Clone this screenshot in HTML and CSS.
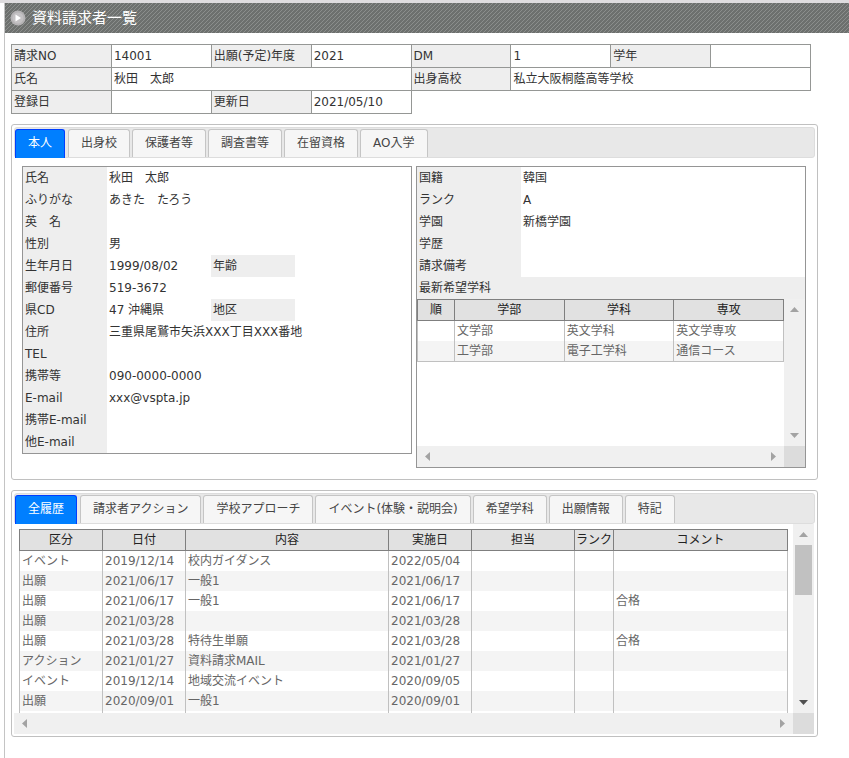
FILE: index.html
```html
<!DOCTYPE html>
<html lang="ja">
<head>
    <meta charset="UTF-8">
    <meta name="viewport" content="width=device-width, initial-scale=1.0">
    <title>資料請求者一覧</title>
    <link rel="stylesheet" href="styles.css">
</head>
<body>
    <div class="frame">
        <header class="page-header">
            <svg class="header-icon" width="16" height="16" viewBox="0 0 16 16">
                <circle cx="8" cy="8" r="7.5" fill="#b5b3b5"/>
                <circle cx="8" cy="8" r="5.5" fill="#c4c2c4"/>
                <path d="M5.5 4.5L11 8L5.5 11.5Z" fill="#fff"/>
            </svg>
            <h1>資料請求者一覧</h1>
        </header>

        <main>
            <!-- 基本情報 -->
            <table class="summary">
                <tr>
                    <th>請求NO</th><td>14001</td>
                    <th>出願(予定)年度</th><td>2021</td>
                    <th>DM</th><td>1</td>
                    <th>学年</th><td></td>
                </tr>
                <tr>
                    <th>氏名</th><td colspan="3">秋田　太郎</td>
                    <th>出身高校</th><td colspan="3">私立大阪桐蔭高等学校</td>
                </tr>
                <tr>
                    <th>登録日</th><td></td>
                    <th>更新日</th><td>2021/05/10</td>
                </tr>
            </table>

            <!-- 本人情報 -->
            <section class="panel">
                <nav class="tabs">
                    <button type="button" class="tab active">本人</button>
                    <button type="button" class="tab">出身校</button>
                    <button type="button" class="tab">保護者等</button>
                    <button type="button" class="tab">調査書等</button>
                    <button type="button" class="tab">在留資格</button>
                    <button type="button" class="tab">AO入学</button>
                </nav>
                <div class="person">
                    <div class="box">
                        <table class="detail">
                            <colgroup>
                                <col class="col-label"><col class="col-value"><col class="col-label"><col>
                            </colgroup>
                            <tr><th>氏名</th><td colspan="3">秋田　太郎</td></tr>
                            <tr><th>ふりがな</th><td colspan="3">あきた　たろう</td></tr>
                            <tr><th>英　名</th><td colspan="3"></td></tr>
                            <tr><th>性別</th><td colspan="3">男</td></tr>
                            <tr><th>生年月日</th><td>1999/08/02</td><th>年齢</th><td></td></tr>
                            <tr><th>郵便番号</th><td colspan="3">519-3672</td></tr>
                            <tr><th>県CD</th><td>47 沖縄県</td><th>地区</th><td></td></tr>
                            <tr><th>住所</th><td colspan="3">三重県尾鷲市矢浜XXX丁目XXX番地</td></tr>
                            <tr><th>TEL</th><td colspan="3"></td></tr>
                            <tr><th>携帯等</th><td colspan="3">090-0000-0000</td></tr>
                            <tr><th>E-mail</th><td colspan="3">xxx@vspta.jp</td></tr>
                            <tr><th>携帯E-mail</th><td colspan="3"></td></tr>
                            <tr><th>他E-mail</th><td colspan="3"></td></tr>
                        </table>
                    </div>
                    <div class="box">
                        <table class="detail">
                            <colgroup>
                                <col class="col-value"><col>
                            </colgroup>
                            <tr><th>国籍</th><td>韓国</td></tr>
                            <tr><th>ランク</th><td>A</td></tr>
                            <tr><th>学園</th><td>新橋学園</td></tr>
                            <tr><th>学歴</th><td></td></tr>
                            <tr><th>請求備考</th><td></td></tr>
                            <tr><th colspan="2">最新希望学科</th></tr>
                        </table>
                        <div class="scroller wishes">
                            <div class="view">
                                <table class="grid">
                                    <colgroup>
                                        <col class="col-order"><col><col><col>
                                    </colgroup>
                                    <thead>
                                        <tr><th>順</th><th>学部</th><th>学科</th><th>専攻</th></tr>
                                    </thead>
                                    <tbody>
                                        <tr><td></td><td>文学部</td><td>英文学科</td><td>英文学専攻</td></tr>
                                        <tr><td></td><td>工学部</td><td>電子工学科</td><td>通信コース</td></tr>
                                    </tbody>
                                </table>
                            </div>
                            <div class="bar bar-v">
                                <button type="button" class="arrow" aria-label="上へ"><svg width="9" height="5" viewBox="0 0 9 5"><path d="M4.5 0L9 5H0Z"/></svg></button>
                                <button type="button" class="arrow" aria-label="下へ"><svg width="9" height="5" viewBox="0 0 9 5"><path d="M0 0H9L4.5 5Z"/></svg></button>
                            </div>
                            <div class="bar bar-h">
                                <button type="button" class="arrow" aria-label="左へ"><svg width="5" height="9" viewBox="0 0 5 9"><path d="M5 0V9L0 4.5Z"/></svg></button>
                                <button type="button" class="arrow" aria-label="右へ"><svg width="5" height="9" viewBox="0 0 5 9"><path d="M0 0L5 4.5L0 9Z"/></svg></button>
                            </div>
                            <div class="corner"></div>
                        </div>
                    </div>
                </div>
            </section>

            <!-- 履歴 -->
            <section class="panel">
                <nav class="tabs">
                    <button type="button" class="tab active">全履歴</button>
                    <button type="button" class="tab">請求者アクション</button>
                    <button type="button" class="tab">学校アプローチ</button>
                    <button type="button" class="tab">イベント(体験・説明会)</button>
                    <button type="button" class="tab">希望学科</button>
                    <button type="button" class="tab">出願情報</button>
                    <button type="button" class="tab">特記</button>
                </nav>
                <div class="scroller history">
                    <div class="view">
                        <table class="grid">
                            <colgroup>
                                <col class="col-date"><col class="col-date"><col><col class="col-date"><col class="col-staff"><col class="col-rank"><col class="col-comment">
                            </colgroup>
                            <thead>
                                <tr><th>区分</th><th>日付</th><th>内容</th><th>実施日</th><th>担当</th><th>ランク</th><th>コメント</th></tr>
                            </thead>
                            <tbody>
                                <tr><td>イベント</td><td>2019/12/14</td><td>校内ガイダンス</td><td>2022/05/04</td><td></td><td></td><td></td></tr>
                                <tr><td>出願</td><td>2021/06/17</td><td>一般1</td><td>2021/06/17</td><td></td><td></td><td></td></tr>
                                <tr><td>出願</td><td>2021/06/17</td><td>一般1</td><td>2021/06/17</td><td></td><td></td><td>合格</td></tr>
                                <tr><td>出願</td><td>2021/03/28</td><td></td><td>2021/03/28</td><td></td><td></td><td></td></tr>
                                <tr><td>出願</td><td>2021/03/28</td><td>特待生単願</td><td>2021/03/28</td><td></td><td></td><td>合格</td></tr>
                                <tr><td>アクション</td><td>2021/01/27</td><td>資料請求MAIL</td><td>2021/01/27</td><td></td><td></td><td></td></tr>
                                <tr><td>イベント</td><td>2019/12/14</td><td>地域交流イベント</td><td>2020/09/05</td><td></td><td></td><td></td></tr>
                                <tr><td>出願</td><td>2020/09/01</td><td>一般1</td><td>2020/09/01</td><td></td><td></td><td></td></tr>
                                <tr><td></td><td></td><td></td><td></td><td></td><td></td><td></td></tr>
                            </tbody>
                        </table>
                    </div>
                    <div class="bar bar-v">
                        <button type="button" class="arrow" aria-label="上へ"><svg width="9" height="5" viewBox="0 0 9 5"><path d="M4.5 0L9 5H0Z"/></svg></button>
                        <div class="thumb"></div>
                        <button type="button" class="arrow enabled" aria-label="下へ"><svg width="9" height="5" viewBox="0 0 9 5"><path d="M0 0H9L4.5 5Z"/></svg></button>
                    </div>
                    <div class="bar bar-h">
                        <button type="button" class="arrow" aria-label="左へ"><svg width="5" height="9" viewBox="0 0 5 9"><path d="M5 0V9L0 4.5Z"/></svg></button>
                        <button type="button" class="arrow" aria-label="右へ"><svg width="5" height="9" viewBox="0 0 5 9"><path d="M0 0L5 4.5L0 9Z"/></svg></button>
                    </div>
                    <div class="corner"></div>
                </div>
            </section>
        </main>
    </div>
</body>
</html>
```

FILE: styles.css
```css
* {
    box-sizing: border-box;
}
body {
    margin: 0;
    border-top: 3px solid #dedcde;
    padding-left: 4px;
    font-family: "DejaVu Sans", "Noto Sans CJK JP", sans-serif;
    font-size: 12px;
    line-height: 18px;
    color: #333;
    background: #fff;
}
.frame {
    min-height: calc(100vh - 3px);
    border-left: 1px solid #c4c4c4;
}
.page-header {
    display: flex;
    align-items: center;
    gap: 6px;
    height: 30px;
    padding-left: 5px;
    background-color: #6d706e;
    background-image: linear-gradient(135deg, transparent 38%, #8b8e8c 38%, #8b8e8c 50%, transparent 50%, transparent 88%, #8b8e8c 88%);
    background-size: 4px 4px;
}
h1 {
    margin: 0;
    font-size: 15px;
    font-weight: normal;
    color: #fff;
}
main {
    padding: 11px 31px 0 6px;
}
th {
    font-weight: normal;
    text-align: left;
}
th,
td {
    padding: 0 2px;
    white-space: nowrap;
}

/* 基本情報 */
.summary {
    width: calc(100% - 7px);
    table-layout: fixed;
    border-collapse: collapse;
}
.summary th,
.summary td {
    height: 23px;
    border: 1px solid #959795;
}
.summary th {
    background: #eee;
}

/* パネルとタブ */
.panel {
    margin-top: 10px;
    padding: 2px;
    border: 1px solid #c0c0c0;
    border-radius: 3px;
}
.tabs {
    display: flex;
    gap: 2px;
    height: 31px;
    padding-top: 1px;
    border: 1px solid #ddd;
    border-radius: 3px;
    background: #e8e8e8;
}
.tab {
    height: 28px;
    padding: 0 12px 1px;
    border: 1px solid #c5c5c5;
    border-bottom: none;
    border-radius: 3px 3px 0 0;
    background: #f6f6f6;
    color: #454545;
    font: inherit;
    white-space: nowrap;
    cursor: pointer;
}
.tab.active {
    height: 29px;
    margin-right: 1px;
    padding-bottom: 2px;
    border-color: #003eff;
    background: #007fff;
    color: #fff;
}

/* 本人情報 */
.person {
    display: flex;
    align-items: flex-start;
    gap: 4px;
    padding: 8px 9px 9px 8px;
}
.box {
    flex: 1;
    min-width: 0;
    border: 1px solid #959595;
}
.detail {
    width: 100%;
    table-layout: fixed;
    border-spacing: 0;
}
.detail th,
.detail td {
    height: 22px;
}
.detail th {
    background: #eee;
}
.col-label {
    width: 84px;
}
.col-value {
    width: 104px;
}

/* 一覧表 */
.grid {
    width: 100%;
    table-layout: fixed;
    border-collapse: collapse;
    color: #666;
}
.grid th {
    height: 21px;
    padding: 0;
    border: 1px solid #7f7f7f;
    background: #e1e1e1;
    color: #222;
    text-align: center;
}
.grid td {
    height: 20px;
    border: 1px solid #c0c0c0;
    border-width: 0 1px;
}
.grid tbody tr:nth-child(even) {
    background: #f4f4f4;
}
.grid tbody tr:last-child td {
    height: 21px;
    border-bottom-width: 1px;
}
.col-order {
    width: 37px;
}
.col-date {
    width: 83px;
}
.col-staff {
    width: 103px;
}
.col-rank {
    width: 39px;
}
.col-comment {
    width: 174px;
}

/* スクロール領域 */
.scroller {
    display: grid;
    grid-template-columns: 1fr 21px;
    grid-template-rows: 1fr 21px;
}
.wishes {
    height: 168px;
}
.history {
    height: 210px;
    margin-right: 1px;
}
.view {
    min-width: 0;
    min-height: 0;
    overflow: hidden;
}
.history .view {
    padding: 5px 5px 0;
}
.bar {
    display: flex;
    background: #f0f0f0;
}
.bar-v {
    flex-direction: column;
    align-items: center;
}
.arrow {
    display: flex;
    align-items: center;
    justify-content: center;
    width: 21px;
    height: 21px;
    padding: 0;
    border: none;
    background: none;
}
.arrow:last-child {
    margin-top: auto;
}
.bar-h .arrow:last-child {
    margin: 0 0 0 auto;
}
.arrow svg {
    fill: #a3a3a3;
}
.arrow.enabled svg {
    fill: #505050;
}
.thumb {
    width: 17px;
    height: 50px;
    background: #c1c1c1;
}
.corner {
    background: #dcdcdc;
}
```
